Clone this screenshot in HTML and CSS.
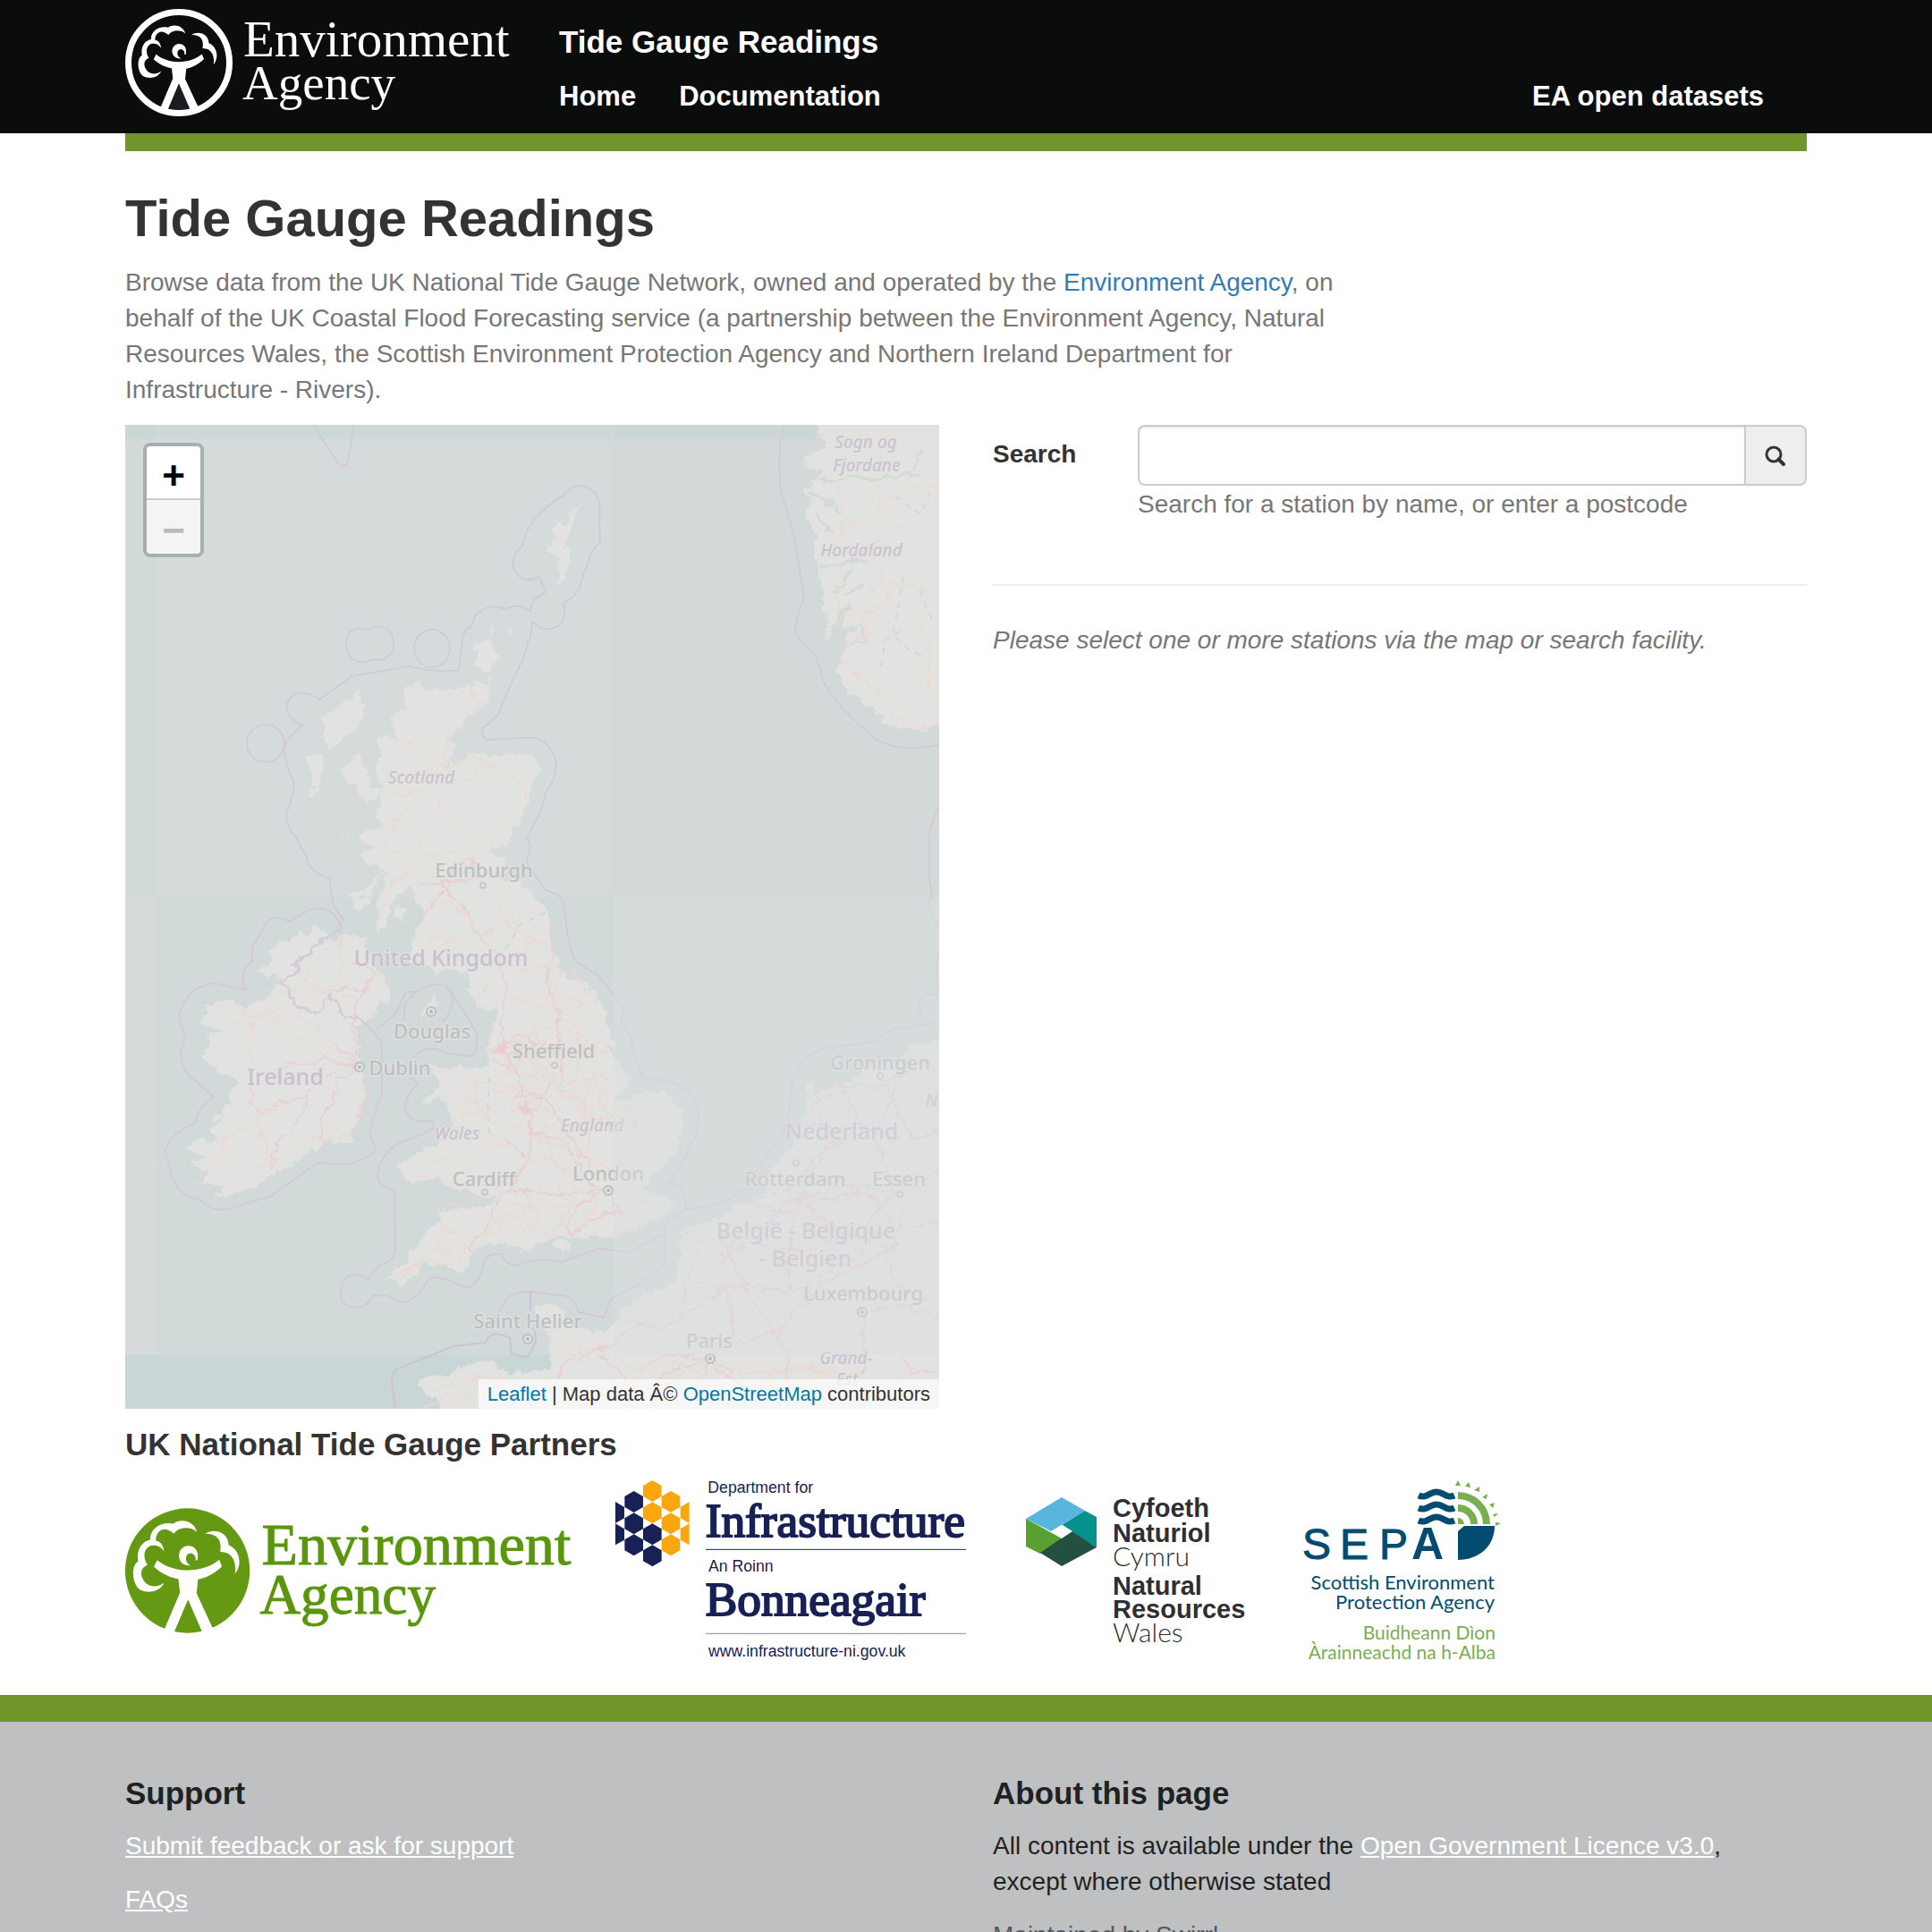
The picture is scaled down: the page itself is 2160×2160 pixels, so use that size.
FILE: index.html
```html
<!DOCTYPE html>
<html lang="en">
<head>
<meta charset="utf-8">
<meta name="viewport" content="width=device-width, initial-scale=1">
<title>Tide Gauge Readings</title>
<link rel="stylesheet" href="styles.css">
</head>
<body>

<svg class="defs" width="0" height="0" aria-hidden="true">
  <defs>
    <g id="ea-figure">
      <path d="M266 397C258 362 215 350 188 370C155 362 112 380 112 423C85 428 65 455 72 495C50 505 48 565 78 588C105 602 145 595 158 565C135 582 105 580 92 560C75 535 82 515 103 506C88 485 88 455 112 443C130 438 148 445 158 462C154 440 148 430 130 425C132 390 160 375 190 403C205 380 245 378 266 397Z"/>
      <path d="M293 403C325 382 370 398 371 440C408 455 418 505 392 536C398 500 385 462 343 463C350 425 335 402 293 403Z"/>
      <path d="M268 490C275 460 258 443 238 443C215 443 203 465 208 485C213 502 228 510 248 508C225 502 225 468 245 467C258 468 264 480 262 492Z"/>
      <path d="M135 490C190 535 285 535 340 489L349 511C325 535 295 550 270 554L265 600L324 727L288 738L237 620L187 738L152 735L210 598L205 553C175 547 148 535 124 512Z"/>
    </g>
  </defs>
</svg>

<header class="site-header">
  <div class="container header-row">
    <a class="brand" href="#" aria-label="Environment Agency">
      <svg class="brand-logo" viewBox="0 0 432 120" width="432" height="120">
        <path d="M60 82L86 116H34Z" fill="#1b1c21"/>
        <g transform="translate(.75 -71.7) scale(.25)" fill="#fff"><use href="#ea-figure"/></g>
        <circle cx="60" cy="60" r="56.5" fill="none" stroke="#fff" stroke-width="7"/>
        <g class="logo-serif" fill="#fff"><text x="132" y="53" font-size="57">Environment</text><text x="131" y="101" font-size="55">Agency</text></g>
      </svg>
    </a>
    <div class="header-text">
      <a class="site-title" href="#">Tide Gauge Readings</a>
      <nav class="site-nav">
        <a href="#">Home</a>
        <a href="#">Documentation</a>
        <a class="nav-end" href="#">EA open datasets</a>
      </nav>
    </div>
  </div>
</header>

<main class="container">
  <div class="accent-bar"></div>
  <h1 class="page-title">Tide Gauge Readings</h1>
  <p class="lead">Browse data from the UK National Tide Gauge Network, owned and operated by the <a href="#">Environment Agency</a>, on behalf of the UK Coastal Flood Forecasting service (a partnership between the Environment Agency, Natural Resources Wales, the Scottish Environment Protection Agency and Northern Ireland Department for Infrastructure - Rivers).</p>

  <div class="columns">
    <section class="map" aria-label="Map of stations">
      <svg class="map-tiles" viewBox="0 0 910 1100" preserveAspectRatio="xMinYMin slice">
        <defs>
          <!-- roughens coastlines and roads -->
          <filter id="rough" filterUnits="userSpaceOnUse" x="0" y="0" width="910" height="1100" color-interpolation-filters="sRGB">
            <feTurbulence type="fractalNoise" baseFrequency=".09" numOctaves="3" seed="4"/>
            <feDisplacementMap in="SourceGraphic" scale="13" xChannelSelector="R" yChannelSelector="G"/>
          </filter>
        </defs>
        <!-- sea, one rectangle per map tile -->
        <rect width="34" height="16" fill="#c9d7d5"/>
        <rect x="34" width="512" height="16" fill="#ced8d9"/>
        <rect x="546" width="364" height="16" fill="#cad7d6"/>
        <rect y="16" width="34" height="512" fill="#d1dad9"/>
        <rect x="34" y="16" width="512" height="512" fill="#d5dbdb"/>
        <rect x="546" y="16" width="364" height="512" fill="#d3d9d9"/>
        <rect y="528" width="34" height="512" fill="#d7dbdc"/>
        <rect x="34" y="528" width="876" height="512" fill="#d2d9d9"/>
        <rect y="1040" width="910" height="60" fill="#c9d6d6"/>

        <!-- land -->
        <g fill="#e2e2e0" stroke="#e2e2e0" stroke-width="1" stroke-linejoin="round" filter="url(#rough)">
          <path d="M320 289L328 290L335 298L345 295L350 299L368 296L383 290L395 291L407 286L405 306L396 318L383 327L362 349L364 355L372 357L355 384L370 376L392 368L417 370L455 368L464 384L453 402L448 427L432 456L420 472L405 475L412 481L427 484L418 500L408 504L425 508L440 511L455 525L473 547L475 582L492 617L517 626L535 651L541 660L537 670L547 693L535 691L545 703L562 732L558 743L550 753L567 757L570 749L603 747L624 764L620 808L603 827L590 839L577 854L610 866L608 881L590 889L567 902L543 908L500 908L487 906L470 912L435 925L457 921L433 917L405 912L387 925L377 949L360 939L333 937L322 950L310 965L305 954L287 958L313 936L325 920L340 895L353 891L355 878L380 875L407 876L413 865L430 854L412 862L398 864L377 856L360 851L347 841L320 847L305 828L317 819L350 804L367 784L360 758L348 752L330 760L340 750L353 740L340 716L356 719L373 721L405 717L410 680L415 654L397 651L383 629L387 614L377 612L358 606L347 612L333 600L317 603L322 573L333 555L335 541L323 531V516L302 527L290 555L283 566L285 531L293 499L263 484L260 480L278 472L258 463L263 456L290 452L280 438L285 425L287 406L280 381L285 370L283 352L303 349L298 327L313 316L312 302Z"/>
          <path d="M238 384L248 380L260 368L273 402L287 407L273 422L253 402Z"/>
          <path d="M263 299L267 322L255 341L230 363L223 349L222 327L245 309Z"/>
          <path d="M204 372L221 370L213 416L208 416L210 391Z"/>
          <path d="M252 524L267 520L272 534L260 543ZM287 499L263 527L270 531ZM302 536L313 543L312 555L302 547ZM229 470L251 457L240 464Z"/>
          <path d="M393 245L408 241L420 259L400 275L392 270ZM408 226l6 3-4 4ZM427 232l6-6-3 8ZM404 281l6-4-1 8Z"/>
          <path d="M508 90L503 102L497 120L492 131L497 152L487 177L484 173L488 149L470 141L483 127L475 118L485 109L493 118L497 100Z"/>
          <path d="M347 638L348 647L330 664L337 647ZM487 910L497 917L488 923L477 916Z"/>
          <path d="M213 560L228 571L222 579L233 577L250 572L268 573L273 595L287 614L297 632L293 647L283 643L277 662L258 673L262 695L263 721L269 747L262 777L250 788L257 804L240 800L222 801L200 817L173 834L160 843L123 860L100 860L113 851L83 847L98 836L72 828L90 819L68 810L83 799L103 802L95 788L107 780L97 777L117 758L118 740L133 734L113 727L96 718L85 706L100 691L95 684L110 675L82 669L95 660L88 647L120 643L133 653L155 643L175 623L167 614L147 614L163 595L157 592L173 580L197 568L202 573Z"/>
          <path d="M773 -9L779 14L787 24L768 30L760 45L779 50L777 59L758 70L768 84L763 99L773 127L770 144L775 159L780 184L782 209L787 224L782 241L788 241L797 209L813 195L803 227L807 245L797 277L807 299L847 324V334L867 341L890 341L920 334V-9Z"/>
          <path d="M920 690L880 693L867 713L833 716L810 735L787 743L767 751L770 732L762 739L758 774L750 804L727 827L710 846L720 855L707 869L687 869L667 889L623 898L620 938L613 961L567 979L553 990L555 1000L537 1015L510 1011L490 1000L487 986L460 988L475 1022V1057L450 1059L430 1063L410 1047L383 1050L367 1060L330 1067L333 1080L350 1091L347 1110H920Z"/>
        </g>

        <g filter="url(#rough)">
        <!-- fjords -->
        <g fill="none" stroke="#d1d9d9" stroke-width="3" stroke-linejoin="round">
          <path d="M763 66l20-5 10 3 18-6 30 4 8-6 12 4 12-6 14 3M882 52l2-16 6-8M765 76l22 10 12 14M770 100l22 20M775 157l24 1 20-8 8 4M790 190l12-12 10-18M800 235l22-14 4 20-14 6M806 190l22-12"/>
          <path d="M845 130l-12 4-10 8" stroke-width="2"/>
        </g>

        <!-- roads -->
        <g fill="none" stroke="#ebd8d1" stroke-width="1.5" stroke-linejoin="round">
          <path d="M407 300L388 325L362 350L355 384L392 372L430 390L445 404L448 420L415 448L410 472M385 292L391 310L390 325M310 348L332 372L345 385M355 384L320 420L305 445L285 475M408 378L370 408L352 420L355 440L375 452L388 480M290 440L312 440M285 406L310 415L328 408M312 450L330 460L332 478L385 480M300 478L350 482M352 510L330 495L300 510L290 540"/>
          <path d="M360 555L350 530L378 545L395 570L430 560L455 545M420 510L415 540L440 570L470 580M445 570L455 600L480 610L470 650L500 640L520 652M330 590L345 570L380 580M405 600L440 610L480 605M395 640L410 620M430 690L470 675L500 660L535 668M420 700L450 715L480 700L540 700M425 722L470 730L520 740L548 752M430 640L460 650L490 655M500 660L510 700L500 750L530 790M440 760L480 750L530 760L620 764M430 780L470 800L520 780L560 800L610 780M440 830L470 820L510 840M390 730L395 770L425 790M350 722L390 735L420 735M370 775L420 760M320 830L360 820L400 815L420 800M318 838L380 850L430 850M370 775L375 820M350 895L390 910L420 900M355 870L400 880L430 900L490 905M430 870L470 880L540 860M500 850L520 890L560 880M540 860L600 872M560 800L560 850M440 850L470 900M308 955L345 925L390 915M300 952L335 935L370 938L385 915M360 890L350 925M500 610L530 650M455 710L470 690L490 720L460 740ZM440 700L470 720L500 710M455 660L460 690L430 720L455 750L440 790M480 740L510 760L520 800L500 830M520 720L540 780L590 790M470 765L510 790L560 760"/>
          <path d="M415 690L440 735L430 770M425 705L500 735L540 730M470 780L480 830L460 860M510 700L530 720L505 770M445 800L500 810L540 830L590 820M400 740L430 750L470 740M395 790L430 810M465 700L485 670L515 690M490 600L480 640L500 660M420 740L445 745L440 765M480 850L500 870L480 900M520 850L525 875L505 900M545 860L550 905M450 870L440 905M405 890L440 885L460 900M350 940L365 910M470 810L505 855M525 760L515 820L545 845M560 760L580 800M355 735L375 760L400 755M380 740L378 790"/>
          <path d="M245 575L215 595L200 620L225 640L265 640M160 640L158 660L120 668M158 660L215 700L262 720M130 650L135 664L160 655L200 665L260 715M150 658L138 680L142 700L140 735M105 802L150 775L200 745M105 802L125 825L160 828L200 800L250 795L262 770M150 775L162 828M160 640L240 632M175 625L190 630L200 650M240 575L243 615L250 630M75 850L110 810"/>
          <path d="M837 0L843 20M825 190L850 175L900 185L910 196M845 148L846 170L855 190L850 200L825 215L830 235L815 240M840 60L842 85L840 105L870 118L885 127L910 115M795 60L802 90L800 125L808 120L810 108L840 105M795 170L797 225M842 90L880 70L910 66M885 200L895 235L900 260L898 290L910 312M803 240L805 265L825 285L845 300L850 315L885 340L910 330M850 200L830 205L790 220M770 14H790"/>
          <path d="M470 1022L500 1040L540 1030L570 1060L600 1040L640 1060M345 1080L370 1068L420 1065M330 1100L360 1085L400 1085M500 1010L510 1040M545 1080L580 1075L650 1050L700 1060L760 1055L820 1060M700 1080L730 1055M760 1052L800 1068L870 1070"/>
        </g>
        <g fill="none" stroke="#e8cfd1" stroke-width="2" stroke-linejoin="round">
          <path d="M352 512L388 480L390 495M352 512L378 540L395 575L415 590L427 630L420 670L425 700L435 720L450 760L455 790L448 825L430 855L412 870L405 900L392 910L387 925M325 513L360 512L400 505M332 553L350 525L365 515M475 550L478 590L470 620L485 660L488 720L487 745M410 700L440 690L450 695L430 705L470 700L440 680ZM412 710L432 718M432 750L470 752L495 790L520 830M450 790L490 800L520 850L540 856L510 870L490 895L500 905L535 880L555 880L540 856M375 855L400 864M430 855L500 860L540 856M450 820L425 800M458 765L480 730"/>
          <path d="M262 720L220 708L210 717L180 712L172 725M262 720L232 690M262 720L252 695M262 720L237 733L232 760L217 775L222 800M262 705L255 680L258 650L272 620M227 631H270L280 612L255 602M142 735L138 758L152 770L170 758L205 750L215 730L235 725M205 750L205 758L185 790L170 800L165 825L160 832M262 775L270 750L265 730"/>
          <path d="M623 898L670 930L700 915L740 870L800 850L870 860L910 830M640 925L630 950L620 1000L660 970L690 960L740 970L745 900L760 850L790 800L770 760L800 740L840 740L880 720M830 700L880 800L910 790M740 850L790 900L850 920L860 960L900 980M700 915L760 925L820 900L860 860L840 800L760 780M620 1000L600 1010L560 1000M680 1020L675 970L640 960M727 1015L740 1040L738 1070L730 1100M727 1015L780 960L860 920L870 870M727 1015L700 980L665 905M727 1015L670 1030L654 1044L600 1040M830 990L870 985L910 1000M825 995V1060M680 1060L654 1044L600 1060L590 1100M654 1044L640 1100M650 1048L690 1075M480 1070L490 1050L540 1030L580 1000M530 1040L560 1065L560 1100M870 1040L880 1060L910 1060M470 1080L480 1070M740 870L770 820L830 780M800 740L820 780L860 800M690 870L740 880L810 860M775 755V730M690 900L665 940M800 850L845 870L860 900L910 890"/>
        </g>
        <path d="M440 762l8-4 8 6-6 8-8-2ZM412 694l8-4 12 4-8 8-12 0Z" fill="#e8cfcd"/>
        </g>

        <!-- maritime limits and borders -->
        <g fill="none" stroke="#d3cad6" stroke-width="2" stroke-linejoin="round">
          <path d="M210 0L238 43Q245 50 249 42L256 0"/>
          <path d="M247 245C247 225 262 227 270 229C290 220 300 230 300 245C300 262 285 264 277 262C262 270 247 262 247 245Z"/>
          <ellipse cx="343" cy="250" rx="20" ry="21"/>
          <circle cx="157" cy="356" r="21"/>
          <path d="M470 188L463 170Q448 178 438 167Q426 152 445 134Q446 122 455 109Q470 90 490 79Q507 58 525 76Q532 84 530 106L531 131Q520 142 518 152L507 184Q500 195 490 199Q494 215 485 224Q468 234 455 220Q455 235 450 243Q446 262 435 282L427 299Q422 310 417 324Q410 332 400 338Q396 346 405 352L440 350H460Q472 354 480 370Q486 390 470 411Q468 425 460 441L450 461L453 474L448 488L470 520L485 526Q491 532 492 548Q494 575 502 598L530 617L557 651L555 670Q565 680 567 693L578 730L607 734Q632 742 640 762Q644 790 630 808Q625 826 607 848Q620 848 623 854L628 877L655 873Q680 865 697 850L707 831L735 793Q743 780 743 755Q745 710 780 697L837 690L853 678L910 667"/>
          <path d="M628 877Q605 890 603 896V938Q595 950 543 977L535 998L507 992Q500 970 480 973L453 969Q432 970 427 976L412 1002"/>
          <path d="M603 905L563 925L530 921L487 936Q460 930 437 940Q428 940 420 928Q410 924 402 934Q395 968 377 963Q350 950 340 954Q328 975 315 980Q305 982 295 974L277 973Q270 987 257 987Q240 985 241 969Q243 950 257 950Q268 950 271 956Q280 940 297 934Q303 928 302 917L301 856Q282 852 282 839Q285 815 307 802Q325 798 345 786L343 778Q318 782 313 765Q312 750 327 738L320 730"/>
          <path d="M470 188Q455 192 453 209Q440 198 425 206Q405 198 391 213L388 224Q377 230 377 241L373 274Q350 278 317 270L253 281Q235 295 217 307Q200 295 187 302Q170 322 198 336Q178 352 178 363Q178 380 189 400Q188 415 180 435Q180 450 190 460L203 484Q205 500 228 507L233 538L245 555"/>
          <path d="M240 558Q230 535 207 542L183 555Q160 545 155 562L142 584V600Q125 612 135 632Q115 628 100 624Q80 628 73 636Q58 655 61 664L67 686L62 701Q64 725 77 732L99 751Q80 765 79 780Q45 795 45 814Q50 830 52 839Q62 865 83 865Q95 880 113 877L163 862L215 825L247 827Q285 818 278 805L273 793Q280 765 287 747V691L278 679L258 660"/>
          <path d="M312 666V650Q325 625 357 625Q370 640 393 680Q394 700 388 706L360 703Q335 690 322 708M280 677L303 658L313 634L325 634M357 625Q375 645 355 668"/>
          <path d="M738 0Q728 20 733 74Q745 110 750 138L759 193Q750 215 749 231Q752 240 770 255Q775 265 780 285Q790 310 840 352Q870 368 910 357M910 427Q897 450 899 470V506L902 527Q893 545 910 560M910 588Q903 610 910 630M890 660Q880 630 910 638"/>
          <path d="M302 1100L298 1069Q300 1055 308 1054L367 1030L403 1026Q408 1010 430 1021L432 1039L450 1042Q465 1020 455 1010M453 969V990" stroke="#cdc3d3"/>
          <path d="M258 660L247 665L228 635L215 658L195 652L175 623L195 610L187 604L205 590L213 580L240 565V555" stroke="#d5cad8" stroke-width="3" filter="url(#rough)"/>
          <path d="M470 545L440 560L430 580L410 600M407 730L405 770L408 800M860 80L890 100L900 75M870 170L865 200L858 235L875 250L895 260M888 185L905 225M845 270L850 240L870 228M710 865L740 855L800 870L830 850L870 850M860 745L840 790L870 800M735 920L745 970L780 950L820 930L840 900" stroke="#d9d3dc" stroke-dasharray="7 7"/>
        </g>

        <!-- capitals and cities -->
        <g fill="#e3e3e2" stroke="#bdbfbe" stroke-width="2">
          <circle cx="342" cy="656" r="5"/><circle cx="262" cy="718" r="5"/><circle cx="540" cy="856" r="5"/><circle cx="450" cy="1022" r="5"/><circle cx="654" cy="1044" r="5"/><circle cx="824" cy="992" r="5"/>
          <g stroke="#c8c9c8"><circle cx="480" cy="716" r="3"/><circle cx="400" cy="515" r="3"/><circle cx="402" cy="858" r="3"/><circle cx="750" cy="825" r="3"/><circle cx="844" cy="728" r="3"/><circle cx="866" cy="860" r="3"/></g>
        </g>
        <g fill="#b5b7b6"><circle cx="342" cy="656" r="2"/><circle cx="262" cy="718" r="2"/><circle cx="540" cy="856" r="2"/><circle cx="450" cy="1022" r="2"/><circle cx="654" cy="1044" r="2"/><circle cx="824" cy="992" r="2"/></g>

        <g class="label label-city">
          <text x="401" y="506">Edinburgh</text>
          <text x="343" y="686">Douglas</text>
          <text x="307" y="727">Dublin</text>
          <text x="401" y="851">Cardiff</text>
          <text x="479" y="708">Sheffield</text>
          <text x="540" y="845">London</text>
          <text x="450" y="1010">Saint Helier</text>
          <text x="653" y="1032">Paris</text>
          <text x="844" y="721">Groningen</text>
          <text x="749" y="851">Rotterdam</text>
          <text x="865" y="851">Essen</text>
          <text x="825" y="979">Luxembourg</text>
        </g>
        <g class="label label-country">
          <text x="353" y="605">United Kingdom</text>
          <text x="179" y="738">Ireland</text>
          <text x="801" y="799">Nederland</text>
          <text x="761" y="910">België - Belgique</text>
          <text x="760" y="941">- Belgien</text>
        </g>
        <g class="label label-region">
          <text x="331" y="401">Scotland</text>
          <text x="371" y="799">Wales</text>
          <text x="522" y="790">England</text>
          <text x="828" y="26">Sogn og</text>
          <text x="829" y="52">Fjordane</text>
          <text x="823" y="147">Hordaland</text>
          <text x="904" y="762">Ni</text>
          <text x="806" y="1050">Grand-</text>
          <text x="807" y="1074">Est</text>
        </g>

        <!-- tiles still fading in -->
        <rect x="546" y="528" width="364" height="512" fill="#dcdddf" opacity=".45"/>
      </svg>
      <div class="zoom-control">
        <button type="button" aria-label="Zoom in">+</button>
        <button type="button" aria-label="Zoom out" disabled>−</button>
      </div>
      <div class="attribution"><a href="#">Leaflet</a> | Map data Â© <a href="#">OpenStreetMap</a> contributors</div>
    </section>

    <section class="panel">
      <form class="search">
        <label class="search-label" for="station-search">Search</label>
        <div class="search-field">
          <div class="input-group">
            <input id="station-search" type="text" aria-describedby="search-help">
            <button type="button" aria-label="Search">
              <svg viewBox="0 0 24 24" width="24" height="24" fill="none" stroke="#333" stroke-width="3"><circle cx="10" cy="11" r="8"/><path d="M15.500 16.500L21 22" stroke-width="4" stroke-linecap="round"/></svg>
            </button>
          </div>
          <p class="help" id="search-help">Search for a station by name, or enter a postcode</p>
        </div>
      </form>
      <hr class="rule">
      <p class="notice">Please select one or more stations via the map or search facility.</p>
    </section>
  </div>

  <h2 class="section-title">UK National Tide Gauge Partners</h2>
  <div class="partners">
    <svg class="logo" role="img" aria-label="Environment Agency" viewBox="30 318 1480 414" width="501" height="140">
      <circle cx="235" cy="525" r="206" fill="#659913"/>
      <g fill="#fff"><use href="#ea-figure"/></g>
      <g class="logo-serif" fill="#5a960c" stroke="#5a960c" stroke-width="3"><text x="480" y="503" font-size="196">Environment</text><text x="474" y="668" font-size="187">Agency</text></g>
    </svg>

    <svg class="logo" role="img" aria-label="Department for Infrastructure" viewBox="81 72 1182 612" width="394" height="204">
      <defs><path id="hex" d="M0-36L31-18V18L0 36L-31 18V-18Z"/></defs>
      <g fill="#faa70f">
        <use href="#hex" x="208" y="111"/><use href="#hex" x="208" y="184"/><use href="#hex" x="270" y="147"/><use href="#hex" x="270" y="220"/><use href="#hex" x="270" y="292"/>
        <path d="M332 147V219L302 202V165ZM332 220V292L302 275V238Z"/>
      </g>
      <g fill="#172156">
        <use href="#hex" x="208" y="256"/><use href="#hex" x="208" y="328"/><use href="#hex" x="146" y="147"/><use href="#hex" x="146" y="220"/><use href="#hex" x="146" y="292"/>
        <path d="M84 147V219L114 202V165ZM84 220V292L114 275V238Z"/>
      </g>
      <path d="M387 307H1260" stroke="#172156" stroke-width="3"/>
      <path d="M387 589H1260" stroke="#8388a6" stroke-width="3"/>
      <g fill="#172156" class="logo-sans" font-size="53"><text x="394" y="118">Department for</text><text x="396" y="381">An Roinn</text><text x="396" y="665">www.infrastructure-ni.gov.uk</text></g>
      <g fill="#172156" stroke="#172156" stroke-width="6" class="logo-serif" font-size="160"><text x="386" y="264">Infrastructure</text><text x="386" y="527">Bonneagair</text></g>
    </svg>

    <svg class="logo" role="img" aria-label="Natural Resources Wales" viewBox="0 0 284 204" width="284" height="204">
      <path d="M20 44L60 20L86 35L48 58Z" fill="#58b5de"/>
      <path d="M86 35L99 42V76L71 59L60 51Z" fill="#06918f"/>
      <path d="M20 44L60 66L36 83L20 75Z" fill="#58a02f"/>
      <path d="M36 82L71 58L99 76L60 97Z" fill="#23503f"/>
      <path d="M48 58L61 51L72 58L60 66Z" fill="#fff"/>
      <g fill="#2f2f31" font-size="29" class="logo-sans">
        <g font-weight="700"><text x="117" y="42">Cyfoeth</text><text x="117" y="70">Naturiol</text><text x="117" y="129">Natural</text><text x="117" y="155">Resources</text></g>
        <g class="logo-light" font-size="30"><text x="117" y="97">Cymru</text><text x="117" y="182">Wales</text></g>
      </g>
    </svg>

    <svg class="logo" role="img" aria-label="Scottish Environment Protection Agency" viewBox="0 0 222 204" width="222" height="204">
      <g fill="none" stroke="#034c70" stroke-width="7">
        <path d="M129 18C138 22 141 14 149 14S160 22 169 18"/><path d="M129 32C138 36 141 28 149 28S160 36 169 32"/><path d="M129 46C138 50 141 42 149 42S160 50 169 46"/>
      </g>
      <g fill="none" stroke="#7aae50" stroke-width="8"><path d="M173 18A32 32 0 0 1 205 50"/><path d="M173 32A18 18 0 0 1 191 50"/></g>
      <path d="M173 43A7 7 0 0 1 180 50H173ZM170 7l3-6 3 6ZM181 8l4-5 2 6ZM191 12l6-4v6ZM200 20l6-4-1 6ZM208 28l6-2-2 6ZM212 39l6-1-4 4ZM215 48l6 1-6 3Z" fill="#7aae50"/>
      <path d="M180 52H214C214 75 196 90 173 90V58Z" fill="#034c70"/>
      <g fill="#034c70" class="logo-sans"><text x="-1 41 85 123" y="89" font-size="48" stroke="#034c70" stroke-width="1">SEP</text><text x="121" y="89" font-size="50" font-weight="700">A</text></g>
      <g class="logo-lato" text-anchor="end">
        <g fill="#034c70" font-size="22"><text x="214" y="123">Scottish Environment</text><text x="214" y="145">Protection Agency</text></g>
        <g fill="#7aae50" font-size="21"><text x="215" y="179">Buidheann Dìon</text><text x="215" y="201">Àrainneachd na h-Alba</text></g>
      </g>
    </svg>
  </div>
</main>

<footer class="site-footer">
  <div class="container columns">
    <section>
      <h2>Support</h2>
      <p><a href="#">Submit feedback or ask for support</a></p>
      <p><a href="#">FAQs</a></p>
    </section>
    <section class="about">
      <h2>About this page</h2>
      <p>All content is available under the <a href="#">Open Government Licence v3.0</a>, except where otherwise stated</p>
      <p class="muted">Maintained by Swirrl</p>
    </section>
  </div>
</footer>
</body>
</html>
```

FILE: styles.css
```css
*, *::before, *::after { box-sizing: border-box; }

body {
  margin: 0;
  background: #fff;
  color: #333;
  font: 28px/40px "Liberation Sans", Arial, sans-serif;
}

h1, h2, p { margin: 0; }
a { color: #337ab7; text-decoration: none; }
svg { display: block; }

.defs { position: absolute; }

.container {
  width: calc(100% - 280px);
  max-width: 1880px;
  margin: 0 auto;
}

/* Header */
.site-header { background: #0b0c0c; color: #fff; }
.site-header a { color: inherit; }
.header-row { display: flex; gap: 53px; }
.brand { padding-top: 10px; }
.header-text {
  flex: 1;
  display: flex;
  flex-direction: column;
  gap: 21px;
  padding: 27px 48px 21px 0;
  font-weight: 700;
}
.site-title { font-size: 35px; }
.site-nav { display: flex; gap: 48px; font-size: 31px; }
.nav-end { margin-left: auto; }

/* Introduction */
.accent-bar { height: 20px; background: #6f952b; }
.page-title {
  margin: 43px 0 20px;
  font-size: 58px;
  line-height: 64px;
}
.lead { max-width: 1395px; margin-bottom: 19px; color: #777; }

.columns {
  display: grid;
  grid-template-columns: 1fr 1fr;
  column-gap: 60px;
}

/* Map */
.map {
  position: relative;
  height: 1100px;
  overflow: hidden;
  background: #ddd;
}
.map-tiles { width: 100%; height: 100%; }
.label {
  font-family: "Noto Sans", sans-serif;
  font-weight: 500;
  text-anchor: middle;
  paint-order: stroke;
  stroke: #e3e3e2;
  stroke-opacity: .7;
  stroke-width: 3px;
}
.label-city { font-size: 22px; fill: #bebfbe; }
.label-country { font-size: 25px; fill: #cabfce; }
.label-region { font-size: 19px; font-style: italic; fill: #cbc2cf; }

.zoom-control {
  position: absolute;
  top: 20px;
  left: 20px;
  display: flex;
  flex-direction: column;
  width: 68px;
  border: 4px solid rgba(0, 0, 0, .2);
  border-radius: 8px;
  background-clip: padding-box;
}
.zoom-control button {
  height: 60px;
  padding: 8px 0 0;
  border: 0;
  background: #fff;
  color: #000;
  font: 700 44px/50px "Liberation Sans", Arial, sans-serif;
}
.zoom-control button:first-child {
  border-bottom: 2px solid #ccc;
  border-radius: 4px 4px 0 0;
}
.zoom-control button:last-child { border-radius: 0 0 4px 4px; }
.zoom-control button:disabled { background: #f4f4f4; color: #bbb; }

.attribution {
  position: absolute;
  right: 0;
  bottom: 0;
  padding: 0 10px;
  background: rgba(255, 255, 255, .7);
  font-size: 22px;
  line-height: 33px;
}
.attribution a { color: #0078a8; }

/* Search panel */
.search { display: grid; grid-template-columns: 162px 1fr; }
.search-label { padding-top: 13px; font-weight: 700; }
.input-group { display: flex; height: 68px; }
.input-group input {
  flex: 1;
  min-width: 0;
  padding: 12px 24px;
  border: 2px solid #ccc;
  border-right: 0;
  border-radius: 8px 0 0 8px;
  box-shadow: inset 0 2px 2px rgba(0, 0, 0, .075);
  font: inherit;
}
.input-group button {
  display: flex;
  align-items: center;
  justify-content: center;
  width: 70px;
  padding: 0;
  border: 2px solid #ccc;
  border-radius: 0 8px 8px 0;
  background: #eee;
}
.help { padding-top: 1px; }
.help, .notice { color: #777; }
.rule {
  margin: 69px 0 41px;
  border: 0;
  border-top: 2px solid #eee;
}
.notice { font-style: italic; }

/* Partners */
.section-title { margin: 20px 0 19px; font-size: 35px; }
.partners {
  display: flex;
  flex-wrap: wrap;
  align-items: center;
  gap: 46px;
  margin-bottom: 37px;
}
.logo { overflow: visible; }
.logo-serif { font-family: "Liberation Serif", serif; }
.logo-sans { font-family: "Liberation Sans", sans-serif; }
.logo-light { font-family: Lato, sans-serif; font-weight: 300; }
.logo-lato { font-family: Lato, sans-serif; }

/* Footer */
.site-footer {
  padding: 60px 0;
  border-top: 30px solid #6f952b;
  background: #bfc0c2;
  color: #1f2222;
}
.site-footer h2 { margin-bottom: 19px; font-size: 35px; }
.site-footer p { margin-bottom: 20px; }
.site-footer a { color: #fff; text-decoration: underline; }
.site-footer .muted { color: #555a5a; }
.about { padding-right: 60px; }
```
